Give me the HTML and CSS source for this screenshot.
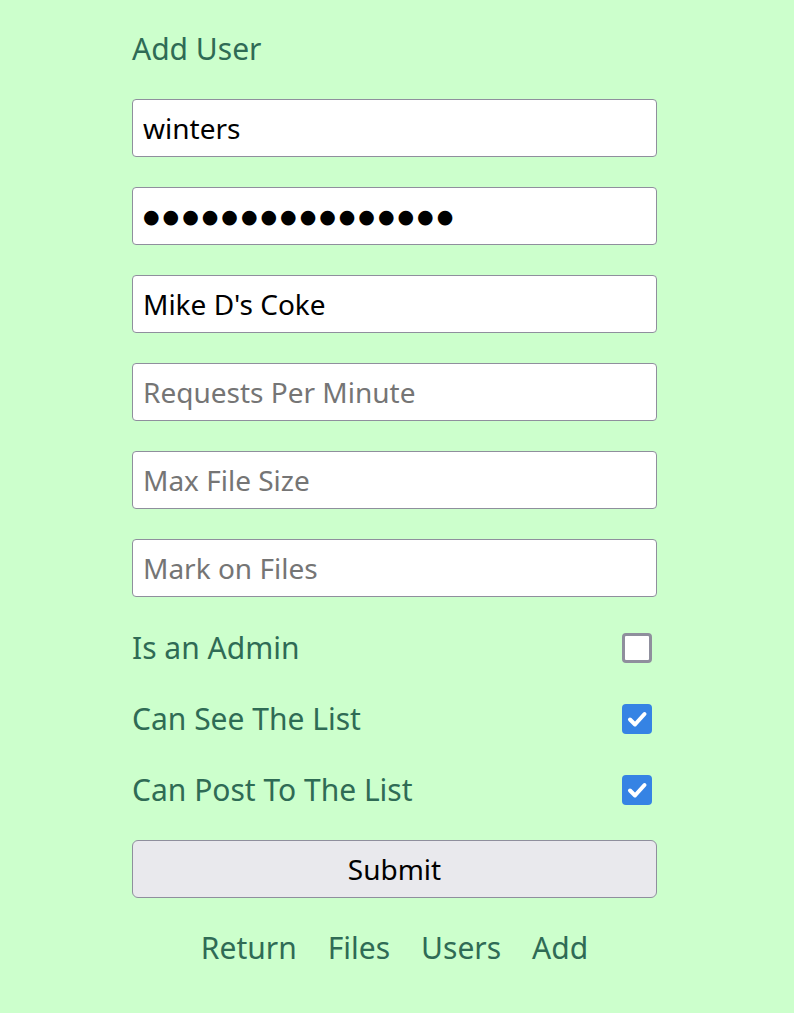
FILE: index.html
```html
<!DOCTYPE html>
<html lang="en">
<head>
<meta charset="utf-8">
<title>Add User</title>
<link rel="stylesheet" href="styles.css">
</head>
<body>
<main class="page">
  <h1 class="title">Add User</h1>
  <form class="form">
    <input class="field" type="text" value="winters">
    <input class="field secret" type="text" value="&#9679;&#9679;&#9679;&#9679;&#9679;&#9679;&#9679;&#9679;&#9679;&#9679;&#9679;&#9679;&#9679;&#9679;&#9679;&#9679;" aria-label="Password">
    <input class="field" type="text" value="Mike D's Coke">
    <input class="field" type="text" placeholder="Requests Per Minute">
    <input class="field" type="text" placeholder="Max File Size">
    <input class="field" type="text" placeholder="Mark on Files">
    <label class="check-row"><span>Is an Admin</span><span class="box"></span></label>
    <label class="check-row"><span>Can See The List</span><span class="box on"><svg viewBox="0 0 30 30" width="30" height="30"><path d="M8 15.5 L13 20.5 L22.5 10" fill="none" stroke="#fff" stroke-width="4" stroke-linecap="round" stroke-linejoin="round"/></svg></span></label>
    <label class="check-row"><span>Can Post To The List</span><span class="box on"><svg viewBox="0 0 30 30" width="30" height="30"><path d="M8 15.5 L13 20.5 L22.5 10" fill="none" stroke="#fff" stroke-width="4" stroke-linecap="round" stroke-linejoin="round"/></svg></span></label>
    <button class="submit" type="button">Submit</button>
  </form>
  <nav class="nav">
    <a href="#">Return</a>
    <a href="#">Files</a>
    <a href="#">Users</a>
    <a href="#">Add</a>
  </nav>
</main>
</body>
</html>
```
FILE: styles.css
```css
html, body {
  margin: 0;
  padding: 0;
  background: #ccffcc;
}
body {
  font-family: "Noto Sans", "Open Sans", sans-serif;
  color: #2f6b55;
}
.page {
  width: 525px;
  margin-left: 132px;
  padding-top: 26px;
}
.title {
  margin: 0;
  font-size: 30px;
  font-weight: normal;
  line-height: 45px;
}
.form {
  display: flex;
  flex-direction: column;
  gap: 30px;
  margin-top: 28px;
}
.field {
  box-sizing: border-box;
  width: 525px;
  height: 58px;
  margin: 0;
  padding: 0 10px;
  border: 1px solid #8f8f9d;
  border-radius: 4px;
  background: #fff;
  font-family: "Noto Sans", sans-serif;
  font-size: 28px;
  color: #000;
  outline: none;
}
.field.secret {
  font-family: "DejaVu Sans", sans-serif;
  font-size: 19px;
  letter-spacing: 3px;
}
.field::placeholder {
  color: #757575;
  opacity: 1;
}
.check-row {
  display: flex;
  justify-content: space-between;
  align-items: center;
  height: 41px;
  font-size: 30px;
  padding-right: 5px;
}
.box {
  box-sizing: border-box;
  width: 30px;
  height: 30px;
  border: 3px solid #8f8f9d;
  border-radius: 4px;
  background: #fff;
}
.box.on {
  border: none;
  background: #3583e4;
}
.box svg {
  display: block;
}
.submit {
  box-sizing: border-box;
  width: 525px;
  height: 58px;
  border: 1px solid #8f8f9d;
  border-radius: 6px;
  background: #e9e9ed;
  font-family: "Noto Sans", sans-serif;
  font-size: 28px;
  color: #000;
}
.nav {
  display: flex;
  justify-content: center;
  gap: 31px;
  margin-top: 29px;
  font-size: 30px;
}
.nav a {
  color: #2f6b55;
  text-decoration: none;
}
```
